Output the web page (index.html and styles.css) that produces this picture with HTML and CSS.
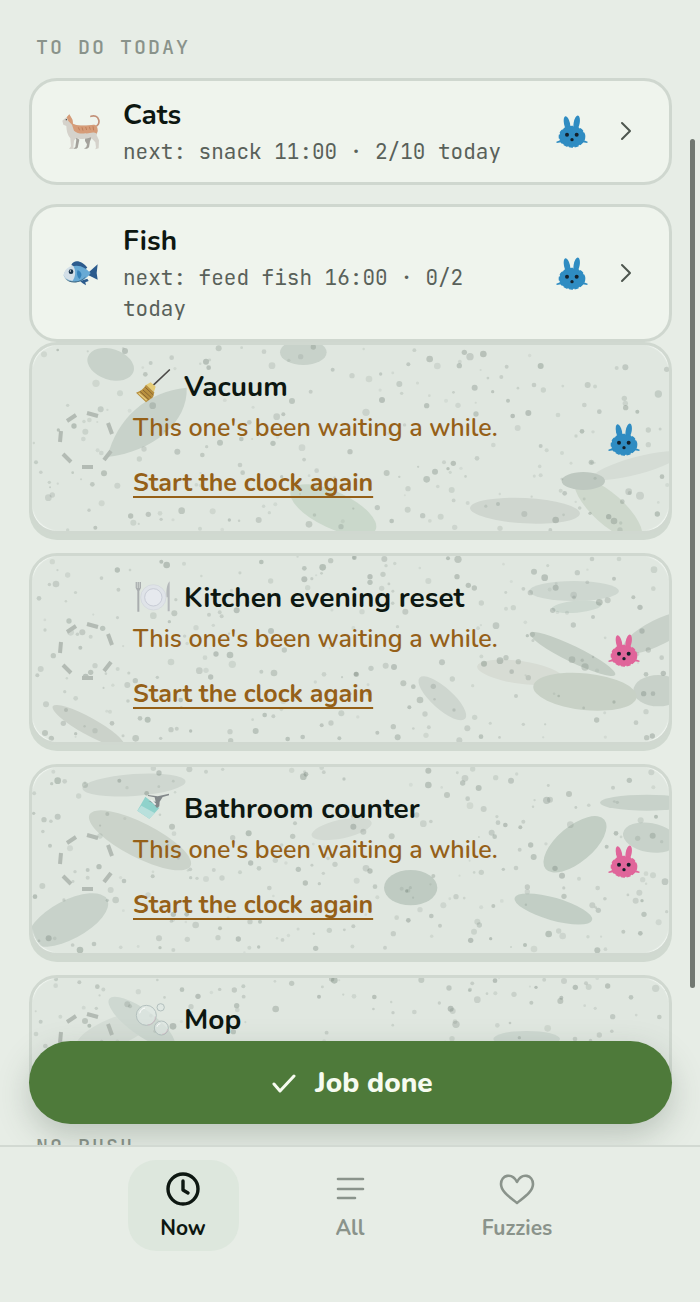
FILE: index.html
```html
<!DOCTYPE html>
<html lang="en">
<head>
  <meta charset="UTF-8">
  <meta name="viewport" content="width=device-width, initial-scale=1">
  <title>To do today</title>
  <link rel="stylesheet" href="styles.css">
</head>
<body>

  <svg class="sprites" aria-hidden="true">
    <symbol id="bunny" viewBox="0 0 96 100">
      <g fill="currentColor">
        <ellipse cx="33" cy="25" rx="9" ry="23" transform="rotate(-12 33 25)"/>
        <ellipse cx="62" cy="23" rx="9" ry="23" transform="rotate(10 62 23)"/>
        <ellipse cx="48" cy="64" rx="38" ry="31"/>
        <path d="M14 74L1 79l1 4 14-2zM82 74l13 5-1 4-14-2z"/>
      </g>
      <ellipse cx="48" cy="64" rx="38" ry="31" fill="none" stroke="currentColor" stroke-width="4" stroke-dasharray="12 5"/>
      <g fill="#14202b">
        <circle cx="33" cy="58" r="6"/>
        <circle cx="62" cy="58" r="6"/>
        <ellipse cx="48" cy="73" rx="5" ry="5"/>
      </g>
    </symbol>
    <symbol id="ring" viewBox="0 0 58 58">
      <path d="M9 10l9-6M29 2l11 3M50 12l4 11M3 20l-1 11M5 43l8 8M24 56h11M46 49l7-9" fill="none" stroke="#b3bbb4" stroke-width="4"/>
    </symbol>
    <symbol id="chevron" viewBox="0 0 24 24">
      <path d="M8 3l8 8-8 8" fill="none" stroke="currentColor" stroke-width="2" stroke-linecap="round" stroke-linejoin="round"/>
    </symbol>
  </svg>

  <div class="app">
    <main class="feed">
      <h2 class="label">TO DO TODAY</h2>

      <div class="pets">
        <a class="pet" href="#cats">
          <svg class="pet-icon" viewBox="0 0 114 114" aria-hidden="true">
            <path d="M96 42c12-2 17-12 14-22-3-10-13-14-23-10" fill="none" stroke="#c29078" stroke-width="5" stroke-linecap="round"/>
            <path d="M70 62l-1 22 6 10-2 8-7 5h9l6-4 3-18 6-14zM36 66l7 14-3 22-6 5h9l4-3 5-24z" fill="#a3a19b"/>
            <path d="M1 23l9-8 5-2 7-9 6 10c5 5 4 13 5 18 16 8 44 6 63 3 9 1 11 10 11 19l-3 13 7 15-1 24-10 3 2-6-2-15-14-15c-14 7-32 6-44 2l-6 8-2 18 1 6-14 1 6-8-2-24c-8-9-12-24-12-37l-9-4z" fill="#d5d2cb"/>
            <path d="M14 13l8-9 6 10c5 5 4 13 5 18 16 8 44 6 63 3 9 1 11 10 11 19l-3 8c-12-8-22 1-34-1-14 2-26-1-34-8l-6-18-11-11z" fill="#d69c78"/>
            <path d="M49 43l4 9M60 43l3 10M71 42l3 9M82 41l3 9M93 40l2 12" stroke="#c07f5b" stroke-width="3"/>
            <circle cx="13" cy="20" r="2" fill="#333"/>
          </svg>
          <div class="pet-text">
            <h3 class="title">Cats</h3>
            <p class="next">next: snack 11:00 · 2/10 today</p>
          </div>
          <svg class="bunny blue"><use href="#bunny"/></svg>
          <svg class="chevron"><use href="#chevron"/></svg>
        </a>

        <a class="pet" href="#fish">
          <svg class="pet-icon" viewBox="0 0 114 114" aria-hidden="true">
            <path d="M28 30C36 10 62 18 76 38l-14 10zM81 51l26-23-3 26 3 20-29-14zM54 78l22-7 4 7-10 4 2 9-10-6z" fill="#2c5b8d"/>
            <path d="M5 61C10 38 36 27 56 34c14 5 22 13 30 20-10 15-27 27-46 27-18 0-31-8-35-20z" fill="#68aad5"/>
            <path d="M5 61c1-16 14-27 28-29 10 13 8 34-2 46-13-2-23-8-26-17z" fill="#d3dfe7"/>
            <path d="M8 69c16 15 47 15 64-5-9 18-46 29-64 5z" fill="#35617f"/>
            <path d="M47 45c13 7 15 16 5 27-7-7-9-18-5-27z" fill="#3582b9"/>
            <circle cx="27" cy="50" r="7" fill="#17324a"/><circle cx="25" cy="48" r="2" fill="#fff"/>
          </svg>
          <div class="pet-text">
            <h3 class="title">Fish</h3>
            <p class="next">next: feed fish 16:00 · 0/2 today</p>
          </div>
          <svg class="bunny blue"><use href="#bunny"/></svg>
          <svg class="chevron"><use href="#chevron"/></svg>
        </a>
      </div>

      <div class="jobs">
        <article class="job">
          <svg class="terrazzo" data-card="vacuum" viewBox="36 30 1911 558" preserveAspectRatio="xMinYMin slice" aria-hidden="true">
            <g fill="#c8d2ca">
              <ellipse cx="272" cy="88" rx="72" ry="46" transform="rotate(18 272 88)"/>
              <ellipse cx="850" cy="52" rx="70" ry="38"/>
              <path d="M262 366C290 250 380 170 500 158 505 260 400 350 262 366z"/>
              <ellipse cx="940" cy="525" rx="140" ry="55" transform="rotate(25 940 525)" fill="#cad8cb"/>
              <ellipse cx="1515" cy="527" rx="165" ry="38" transform="rotate(3 1515 527)" fill="#cfd6cf"/>
              <ellipse cx="1850" cy="392" rx="135" ry="26" transform="rotate(-15 1850 392)" fill="#d5dcd5"/>
              <ellipse cx="1765" cy="522" rx="130" ry="46" transform="rotate(42 1765 522)" fill="#ced8cc"/>
              <ellipse cx="1690" cy="438" rx="65" ry="27" fill="#bec8c0"/>
            </g>
          </svg>
          <button class="tick" type="button" aria-label="Tick off Vacuum"><svg><use href="#ring"/></svg></button>
          <div class="job-text">
            <h3 class="title job-title">
              <svg class="job-icon" viewBox="0 0 108 108" aria-hidden="true">
                <path d="M103 3L48 55" stroke="#4c4a48" stroke-width="5" stroke-linecap="round"/>
                <path d="M33 48l14-8 15 13-5 15z" fill="#e5cc76"/>
                <path d="M33 47l25 23-4 15-21 15L3 71c12-4 22-11 30-24z" fill="#b8903f"/>
                <path d="M15 67l27 25M24 63l25 23M31 55l24 23" stroke="#8a6630" stroke-width="3"/>
                <path d="M11 72l24 22" stroke="#e8ce80" stroke-width="4"/>
              </svg>
              Vacuum
            </h3>
            <p class="note">This one's been waiting a while.</p>
            <a class="restart" href="#vacuum">Start the clock again</a>
          </div>
          <svg class="bunny blue"><use href="#bunny"/></svg>
        </article>

        <article class="job">
          <svg class="terrazzo" data-card="kitchen" viewBox="36 33 1911 558" preserveAspectRatio="xMinYMin slice" aria-hidden="true">
            <g fill="#c8d1c9">
              <ellipse cx="205" cy="543" rx="122" ry="26" transform="rotate(29 205 543)" fill="#cbd2ca"/>
              <ellipse cx="1662" cy="138" rx="135" ry="30" fill="#ced7d0"/>
              <ellipse cx="1670" cy="185" rx="75" ry="18" transform="rotate(-5 1670 185)" fill="#cdd8d0"/>
              <ellipse cx="1915" cy="262" rx="120" ry="38" transform="rotate(-27 1915 262)"/>
              <ellipse cx="1658" cy="327" rx="142" ry="24" transform="rotate(26 1658 327)" fill="#c3cdc4"/>
              <ellipse cx="1500" cy="382" rx="130" ry="34" transform="rotate(8 1500 382)" fill="#d7dcd4"/>
              <ellipse cx="1915" cy="437" rx="75" ry="47"/>
              <ellipse cx="1695" cy="440" rx="156" ry="55" transform="rotate(6 1695 440)" fill="#c8d1c6"/>
              <ellipse cx="1267" cy="460" rx="92" ry="32" transform="rotate(42 1267 460)" fill="#ced6cf"/>
            </g>
          </svg>
          <button class="tick" type="button" aria-label="Tick off Kitchen evening reset"><svg><use href="#ring"/></svg></button>
          <div class="job-text">
            <h3 class="title job-title">
              <svg class="job-icon" viewBox="0 0 108 108" aria-hidden="true">
                <circle cx="55" cy="52" r="38" fill="#dfe3e8" stroke="#d0d5db" stroke-width="2"/>
                <circle cx="55" cy="52" r="26" fill="#e6e9ee" stroke="#c8ccd6" stroke-width="3"/>
                <path d="M2 6h16v18l-5 9v62H7V33l-5-9z" fill="#a9adae"/>
                <path d="M7 6v18M13 6v18" stroke="#dfe5df" stroke-width="2"/>
                <path d="M104 4c-9 8-11 30-9 48h3v42h6z" fill="#b4b8ba"/>
              </svg>
              Kitchen evening reset
            </h3>
            <p class="note">This one's been waiting a while.</p>
            <a class="restart" href="#kitchen">Start the clock again</a>
          </div>
          <svg class="bunny pink"><use href="#bunny"/></svg>
        </article>

        <article class="job">
          <svg class="terrazzo" data-card="bathroom" viewBox="36 36 1911 558" preserveAspectRatio="xMinYMin slice" aria-hidden="true">
            <g fill="#c8d2ca">
              <ellipse cx="342" cy="90" rx="155" ry="33" transform="rotate(-4 342 90)" fill="#cfd7d0"/>
              <ellipse cx="360" cy="256" rx="170" ry="52" transform="rotate(27 360 256)" fill="#cbd3ca"/>
              <ellipse cx="145" cy="495" rx="132" ry="58" transform="rotate(-28 145 495)"/>
              <ellipse cx="965" cy="222" rx="92" ry="28" transform="rotate(-12 965 222)" fill="#d3dad3"/>
              <ellipse cx="1172" cy="398" rx="80" ry="53" fill="#bfcbc2"/>
              <ellipse cx="1665" cy="268" rx="115" ry="54" transform="rotate(-40 1665 268)" fill="#c2cec4"/>
              <ellipse cx="1600" cy="462" rx="121" ry="34" transform="rotate(16 1600 462)" fill="#c2cec5"/>
              <ellipse cx="1880" cy="143" rx="140" ry="24"/>
              <ellipse cx="1890" cy="248" rx="82" ry="44" transform="rotate(10 1890 248)"/>
            </g>
          </svg>
          <button class="tick" type="button" aria-label="Tick off Bathroom counter"><svg><use href="#ring"/></svg></button>
          <div class="job-text">
            <h3 class="title job-title">
              <svg class="job-icon" viewBox="0 0 108 108" aria-hidden="true">
                <path d="M31 17l42 34-30 32L7 59z" fill="#8fd2cb"/>
                <path d="M7 59l12-15 40 22-16 17z" fill="#b9e0dc"/>
                <path d="M39 12l29 4 34-8v5l-19 5-9 14-1 14-7 5-13-16-13-4 22 1-3-13-20-4z" fill="#82888a"/>
                <path d="M48 27l14 14" stroke="#eef3f2" stroke-width="5"/>
              </svg>
              Bathroom counter
            </h3>
            <p class="note">This one's been waiting a while.</p>
            <a class="restart" href="#bathroom">Start the clock again</a>
          </div>
          <svg class="bunny pink"><use href="#bunny"/></svg>
        </article>

        <article class="job job-short">
          <svg class="terrazzo" data-card="mop" viewBox="96 39 1911 370" preserveAspectRatio="xMinYMin slice" aria-hidden="true">
            <g fill="#ced8d1">
              <ellipse cx="345" cy="200" rx="125" ry="42" transform="rotate(-22 345 200)" fill="#d5ddd6"/>
              <ellipse cx="425" cy="172" rx="120" ry="38" transform="rotate(36 425 172)"/>
              <ellipse cx="1580" cy="222" rx="100" ry="24"/>
            </g>
          </svg>
          <button class="tick" type="button" aria-label="Tick off Mop"><svg><use href="#ring"/></svg></button>
          <div class="job-text">
            <h3 class="title job-title">
              <svg class="job-icon" viewBox="0 0 108 108" aria-hidden="true">
                <g fill="#e0e8e4" fill-opacity="0.7" stroke="#b3c0be" stroke-width="3">
                  <circle cx="34" cy="40" r="30"/>
                  <circle cx="79" cy="78" r="21"/>
                  <circle cx="77" cy="16" r="11"/>
                </g>
                <path d="M14 34c2-10 9-15 16-16M66 74c2-6 5-8 10-9" fill="none" stroke="#fff" stroke-width="3"/>
                <path d="M61 44c0 13-10 24-23 25M98 81c-2 9-8 15-17 16" fill="none" stroke="#d5b9c4" stroke-width="2"/>
              </svg>
              Mop
            </h3>
          </div>
        </article>
      </div>

      <h2 class="label label-later">NO RUSH</h2>

      <button class="done" type="button">
        <svg viewBox="0 0 24 24" aria-hidden="true"><path d="M2 13l6 7L22 5" fill="none" stroke="currentColor" stroke-width="3" stroke-linecap="round" stroke-linejoin="round"/></svg>
        Job done
      </button>
    </main>

    <nav class="tabs">
      <a class="tab active" href="#now">
        <svg viewBox="0 0 36 36" aria-hidden="true"><g fill="none" stroke="currentColor" stroke-width="3.4" stroke-linecap="round" stroke-linejoin="round"><circle cx="18" cy="18" r="15"/><path d="M18 10v9l5 3"/></g></svg>
        Now
      </a>
      <a class="tab" href="#all">
        <svg viewBox="0 0 36 36" aria-hidden="true"><path d="M6 8h25M6 18h25M6 27h17" fill="none" stroke="currentColor" stroke-width="2.6" stroke-linecap="round"/></svg>
        All
      </a>
      <a class="tab" href="#fuzzies">
        <svg viewBox="0 0 36 36" aria-hidden="true"><path d="M18 32C12 27 2 21 2 13 2 4 13 1 18 11c5-10 16-7 16 2 0 8-10 14-16 19z" fill="none" stroke="currentColor" stroke-width="2.6" stroke-linejoin="round"/></svg>
        Fuzzies
      </a>
    </nav>

    <div class="scrollbar"></div>
  </div>

  <script src="script.js"></script>
</body>
</html>
```

FILE: styles.css
```css
* {
  box-sizing: border-box;
}

body {
  margin: 0;
  background: #e7ede6;
  color: #0d1711;
  font-family: Nunito, Lato, sans-serif;
}

h2, h3, p {
  margin: 0;
}

a {
  color: inherit;
  text-decoration: none;
}

button {
  border: none;
  background: none;
  padding: 0;
  font: inherit;
  cursor: pointer;
}

.sprites {
  position: absolute;
  width: 0;
  height: 0;
}

.app {
  position: relative;
  display: flex;
  flex-direction: column;
  height: 100vh;
}

.feed {
  position: relative;
  flex: 1;
  min-height: 0;
  overflow: hidden;
  padding: 35px 28px 0 29px;
}

.label {
  margin-bottom: 19px;
  padding-left: 7px;
  color: #8a938b;
  font: 500 20px/24px "JetBrains Mono", "DejaVu Sans Mono", monospace;
  letter-spacing: 2px;
}

.label-later {
  margin-top: 31px;
}

.title {
  font-size: 28px;
  line-height: 36px;
  font-weight: 700;
}

.bunny {
  flex: none;
  width: 32px;
  height: 34px;
}

.blue { color: #2f8cc2; }
.pink { color: #e0659a; }

/* pets */
.pets {
  display: flex;
  flex-direction: column;
  gap: 19px;
}

.pet {
  display: flex;
  align-items: center;
  padding: 16px 31px 15px 30px;
  border: 3px solid #cfd7cf;
  border-radius: 28px;
  background: #eff4ed;
}

.pet-icon {
  flex: none;
  width: 38px;
  height: 38px;
  margin-right: 23px;
}

.pet-text {
  flex: 1;
  margin-right: 23px;
}

.next {
  margin-top: 3px;
  color: #59615a;
  font: 21px/31px "JetBrains Mono", "DejaVu Sans Mono", monospace;
}

.chevron {
  flex: none;
  width: 24px;
  height: 24px;
  margin-left: 26px;
  color: #4d554e;
}

/* jobs */
.jobs {
  display: flex;
  flex-direction: column;
  gap: 19px;
}

.job {
  position: relative;
  display: flex;
  align-items: center;
  gap: 17px;
  padding: 22px 29px 19px 26px;
  border: 3px solid #d0d8d0;
  border-radius: 28px;
  background: #e0e7e0;
  box-shadow: 0 6px 0 #d0d9d0;
}

/* light catches only the rounded corners */
.job::after {
  content: "";
  position: absolute;
  inset: 0;
  border-radius: 25px;
  box-shadow: inset 0 0 1px 1px #f3f8f3;
  mask-image:
    linear-gradient(90deg, #000 14px, transparent 24px calc(100% - 24px), #000 calc(100% - 14px)),
    linear-gradient(#000 14px, transparent 24px calc(100% - 24px), #000 calc(100% - 14px));
  mask-composite: intersect;
  pointer-events: none;
}

.terrazzo {
  position: absolute;
  inset: 0;
  width: 100%;
  height: 100%;
  border-radius: 25px;
}

.tick,
.job-text,
.job .bunny {
  position: relative;
}

.tick,
.tick svg {
  display: block;
  flex: none;
  width: 58px;
  height: 58px;
}

.job-text {
  flex: 1;
  padding-bottom: 13px;
}

.job-short .job-text {
  padding-bottom: 41px;
}

.job-title {
  display: flex;
  align-items: center;
  gap: 13px;
  line-height: 40px;
}

.job-icon {
  width: 36px;
  height: 36px;
  margin-left: 2px;
}

.note,
.restart {
  color: #956018;
  font-size: 25px;
  line-height: 32px;
  font-weight: 600;
}

.note {
  margin-top: 5px;
  font-weight: 650;
}

.restart {
  display: inline-block;
  margin-top: 23px;
  font-weight: 700;
  text-decoration: underline;
  text-decoration-thickness: 2px;
  text-underline-offset: 5px;
}

.done {
  position: absolute;
  left: 29px;
  right: 28px;
  bottom: 21px;
  display: flex;
  align-items: center;
  justify-content: center;
  gap: 19px;
  height: 83px;
  padding-left: 4px;
  border-radius: 42px;
  background: #4e7a3a;
  color: #f6fbf0;
  font-size: 28px;
  font-weight: 800;
  box-shadow: 0 12px 32px rgba(60, 80, 65, 0.26);
}

.done svg {
  width: 24px;
  height: 24px;
}

/* bottom tabs */
.tabs {
  display: flex;
  justify-content: center;
  gap: 56px;
  height: 157px;
  padding-top: 13px;
  border-top: 2px solid #d2d9d2;
  background: #e7ede6;
}

.tab {
  display: flex;
  flex-direction: column;
  align-items: center;
  gap: 7px;
  width: 111px;
  height: 91px;
  padding-top: 11px;
  border-radius: 28px;
  color: #8a938b;
  font-size: 21px;
  line-height: 28px;
  font-weight: 700;
}

.tab svg {
  width: 36px;
  height: 36px;
}

.tab.active {
  background: #dde7dd;
  color: #0d1711;
}

.scrollbar {
  position: absolute;
  top: 139px;
  right: 5px;
  width: 5px;
  height: 849px;
  border-radius: 3px;
  background: #707770;
}
```

FILE: script.js
```js
// big chips of each card: x, y, radius
const chips = {
  vacuum: [
    [72,58,9],[113,45,4],[315,48,9],[455,68,7],[392,84,6],[228,145,11],[300,175,9],[376,118,7],[596,40,9],[558,80,9],[566,98,7],
    [732,50,7],[756,92,10],[880,36,8],[842,65,8],[938,104,6],[996,122,8],[872,170,6],[398,212,10],[242,223,9],[208,255,7],[162,273,8],
    [196,290,9],[190,312,7],[143,211,5],[115,285,5],[372,342,8],[472,350,9],[600,323,9],[664,312,7],[560,335,5],[547,360,7],[358,372,8],
    [252,415,9],[217,448,7],[292,452,9],[245,505,9],[85,488,10],[97,480,8],[48,382,6],[88,442,5],[158,413,4],[244,354,7],[660,390,7],
    [668,413,7],[846,338,10],[759,325,8],[688,262,7],[770,245,10],[790,238,6],[816,198,9],[990,350,8],[890,407,7],[785,425,5],
    [332,543,8],[340,563,9],[385,538,8],[420,535,7],[485,527,10],[578,529,9],[716,555,9],[867,568,10],[540,581,6],[963,575,8],[226,578,6],
    [143,585,5],[628,555,5],[748,533,5],[1047,132,10],[1082,117,5],[1138,147,9],[1165,88,6],[1229,72,10],[1252,93,10],[1318,92,8],
    [1333,52,8],[1350,65,11],[1390,57,10],[1364,158,9],[1444,126,6],[1562,93,9],[1086,195,9],[1220,212,8],[1314,211,8],[1145,175,5],
    [1228,182,4],[1038,232,11],[1368,237,8],[1418,170,5],[1464,197,6],[1478,243,7],[1525,234,9],[1493,279,9],[1542,150,7],[1570,165,8],
    [1703,150,9],[1693,210,7],[1738,230,7],[1614,240,7],[1790,99,6],[1816,97,9],[1940,103,8],[1915,177,11],[1852,230,6],[1885,285,8],
    [1885,329,8],[1686,289,7],[1668,303,5],[1562,333,6],[1580,346,6],[1626,354,6],[1420,330,7],[1371,370,7],[1300,385,8],[1272,382,6],
    [1245,410,9],[1220,433,10],[1284,401,5],[1100,414,9],[1164,461,8],[1295,465,9],[1163,524,9],[1072,518,8],[1208,542,8],[1262,545,9],
    [1343,504,6],[1434,507,6],[1513,537,9],[1607,555,10],[1440,580,8],[1304,577,8],[1115,558,7],[1562,421,6],[1622,467,6],[1634,475,7],
    [1714,382,8],[1826,470,10],[1860,482,12],[1807,500,7],[1782,558,10],[1766,545,8],[1800,585,8],[1912,537,8],[1926,425,7],[1710,535,5],
    [1813,190,8],[1816,205,8],[1817,218,8]
  ],
  kitchen: [
    [97,50,8],[108,117,10],[143,90,8],[57,160,7],[440,60,10],[424,50,6],[492,56,6],[292,75,8],[330,75,4],[400,212,10],[463,205,9],
    [448,230,5],[528,248,8],[567,209,6],[605,214,6],[580,241,5],[650,196,9],[724,51,7],[752,108,8],[853,70,7],[853,103,9],[908,67,10],
    [932,47,8],[863,128,8],[1003,38,7],[147,228,8],[152,262,10],[187,262,9],[212,275,6],[248,250,8],[181,308,6],[75,255,5],[100,332,8],
    [225,362,8],[212,382,8],[197,395,9],[293,372,6],[62,372,9],[52,391,6],[322,420,9],[346,407,8],[412,397,5],[453,351,10],[538,377,10],
    [555,338,7],[558,376,8],[588,327,8],[572,396,8],[630,330,10],[637,358,11],[762,384,10],[724,380,6],[793,315,8],[912,388,7],[1009,388,8],
    [753,258,9],[886,411,5],[790,468,9],[482,465,7],[167,460,7],[78,478,9],[138,495,6],[130,535,8],[225,557,8],[75,564,9],[94,580,8],
    [167,566,5],[276,535,7],[270,500,6],[347,580,10],[360,520,7],[383,524,9],[453,554,8],[512,558,5],[630,560,8],[632,587,8],[707,558,9],
    [803,582,7],[848,576,7],[734,510,7],[905,541,6],[933,534,8],[964,505,9],[958,580,6],[422,580,5],[1002,38,5],[1093,42,9],[1089,88,8],
    [1098,62,5],[1050,95,8],[1050,112,8],[1085,130,8],[1225,108,9],[1311,95,8],[1314,43,11],[1284,40,6],[1345,121,8],[1363,129,8],
    [1384,174,8],[1026,200,8],[1156,200,9],[1428,242,10],[1458,191,6],[1480,188,8],[1531,143,8],[1542,80,9],[1574,98,10],[1672,83,8],
    [1607,128,9],[1661,150,10],[1716,42,7],[1797,42,7],[1902,74,10],[1900,131,7],[1782,101,6],[1763,166,9],[1738,172,10],[1840,157,6],
    [1860,187,8],[1598,196,8],[1641,203,6],[1719,216,6],[1660,240,8],[1537,268,8],[1656,344,10],[1695,366,11],[1522,272,5],[1866,258,8],
    [1885,315,8],[1925,338,7],[1878,388,7],[1930,385,8],[1392,356,9],[1440,347,10],[1458,338,8],[1495,350,8],[1475,380,7],[1525,398,8],
    [1097,362,9],[1122,366,9],[1053,370,8],[1266,352,9],[1297,402,8],[1008,387,7],[1240,424,8],[1150,415,9],[1180,425,7],[1200,465,10],
    [1358,422,5],[1488,453,6],[1302,495,5],[1364,517,8],[1168,487,6],[1215,507,8],[1510,538,5],[1120,545,8],[1342,550,9],[1133,577,9],
    [1218,571,8],[1318,586,9],[1383,575,7],[1072,563,6],[1730,525,8],[1848,533,7],[1878,500,8],[1897,573,8],[1880,578,8],[1871,446,8],
    [1899,446,7],[1782,471,5],[1616,453,4]
  ],
  bathroom: [
    [100,50,6],[113,77,10],[134,79,7],[95,86,5],[195,90,9],[298,77,6],[321,98,5],[400,40,8],[417,54,8],[508,43,9],[558,50,6],[608,43,5],
    [380,115,7],[176,123,8],[113,185,9],[72,194,8],[41,175,5],[262,177,6],[456,215,9],[462,236,7],[850,65,10],[858,58,7],[815,46,8],
    [905,38,7],[972,72,5],[825,205,6],[686,235,9],[638,248,8],[818,244,8],[1000,215,9],[240,243,8],[228,248,5],[150,280,9],[90,272,6],
    [237,335,8],[203,345,6],[203,368,6],[165,350,5],[312,378,7],[67,393,9],[45,425,7],[287,435,10],[272,405,9],[262,436,5],[398,364,6],
    [384,420,8],[558,372,9],[606,369,8],[531,370,5],[512,368,5],[717,340,7],[766,316,8],[692,324,8],[835,343,8],[856,384,8],[898,386,5],
    [945,328,8],[1010,377,9],[910,355,5],[748,399,7],[660,352,6],[527,510,10],[500,478,7],[460,478,8],[600,520,6],[690,500,8],[720,500,6],
    [417,550,9],[180,585,10],[222,567,7],[86,550,9],[502,553,8],[460,585,6],[420,578,5],[655,552,8],[594,548,8],[688,578,6],[716,576,5],
    [887,580,8],[928,526,8],[1000,514,6],[1225,47,9],[1225,90,10],[1335,70,10],[1328,84,8],[1358,42,8],[1376,99,9],[1427,68,8],[1473,77,9],
    [1490,57,5],[1281,120,9],[1343,131,7],[1350,152,10],[1391,162,9],[1210,206,10],[1190,180,8],[1434,203,7],[1456,210,7],[1510,200,6],
    [1501,217,6],[1415,233,9],[1424,245,7],[1580,136,11],[1590,134,9],[1647,117,9],[1651,209,10],[1532,270,8],[1541,306,9],[1626,362,9],
    [1677,371,6],[1828,76,8],[1894,52,9],[1900,97,6],[1779,98,6],[1792,142,5],[1862,196,9],[1908,185,6],[1898,242,9],[1853,250,8],
    [1925,260,5],[1788,235,7],[1605,340,8],[1522,396,8],[1522,410,8],[1632,424,8],[1878,356,7],[1899,361,9],[1868,374,8],[1858,413,9],
    [1935,380,10],[1847,437,9],[1866,437,5],[1760,275,6],[1030,230,9],[1115,244,9],[1038,340,10],[1050,348,8],
    [1065,395,7],[1072,427,6],[1160,408,5],[1145,401,6],[1165,407,6],[1240,363,6],[1308,425,8],[1270,451,9],[1200,464,8],[1384,352,8],
    [1450,343,5],[1488,339,7],[1420,453,6],[1234,483,7],[1130,488,7],[1165,496,7],[1260,512,6],[1372,500,9],[1378,510,8],[1362,530,9],
    [1352,556,8],[1120,536,8],[1412,551,5],[1586,537,10],[1616,528,8],[1628,543,10],[1542,582,10],[1515,570,6],[1732,586,9],[1717,451,9],
    [1735,466,8],[1733,399,7],[1810,530,6],[1872,478,8],[1916,502,9],[1940,470,5],[1861,535,7]
  ],
  mop: [
    [167,62,7],[168,43,6],[238,52,6],[292,65,7],[415,80,8],[546,74,7],[594,94,8],[730,64,6],[703,75,8],[875,55,8],[1003,46,10],
    [995,42,8],[827,132,10],[957,95,6],[710,122,8],[712,135,7],[573,125,8],[519,184,10],[382,118,9],[390,124,6],[255,168,9],[268,182,6],
    [122,170,6],[108,207,7],[136,243,7],[289,130,5],[700,200,8],[472,45,4],[1062,94,7],[1123,96,7],[1264,45,9],[1347,69,8],[1410,74,6],
    [1485,47,7],[1486,85,6],[1542,88,8],[1432,104,10],[1461,86,4],[1352,131,9],[1358,138,9],[1318,114,5],[1179,143,5],[1243,141,7],
    [1368,178,11],[1365,170,7],[1492,181,7],[1356,221,8],[1594,113,6],[1681,108,9],[1684,98,6],[1692,48,9],[1726,67,8],[1766,66,9],
    [1758,55,6],[1823,63,8],[1967,70,11],[1893,97,7],[1754,122,4],[1838,155,8],[1978,156,7],[1643,190,10],[1798,210,8],[1725,222,7],
    [1530,174,4],[1558,218,5],[1608,67,5]
  ]
};

// small repeatable generator so the dust stays put between loads
function dust(seed) {
  return () => {
    seed = (seed * 16807) % 2147483647;
    return seed / 2147483647;
  };
}

function addDot(svg, x, y, r, opacity) {
  const dot = document.createElementNS("http://www.w3.org/2000/svg", "circle");
  dot.setAttribute("cx", x);
  dot.setAttribute("cy", y);
  dot.setAttribute("r", r);
  dot.setAttribute("fill", "#6f7d74");
  dot.setAttribute("fill-opacity", opacity);
  svg.appendChild(dot);
}

document.querySelectorAll(".terrazzo").forEach((svg, i) => {
  const rand = dust(4211 + i * 977);
  const box = svg.viewBox.baseVal;
  chips[svg.dataset.card].forEach(([x, y, r]) => addDot(svg, x, y, r, 0.14 + rand() * 0.24));
  for (let n = 0; n < box.height / 6; n++) {
    addDot(svg, box.x + rand() * box.width, box.y + rand() * box.height, 3 + rand() * 3, 0.1 + rand() * 0.14);
  }
});
```
